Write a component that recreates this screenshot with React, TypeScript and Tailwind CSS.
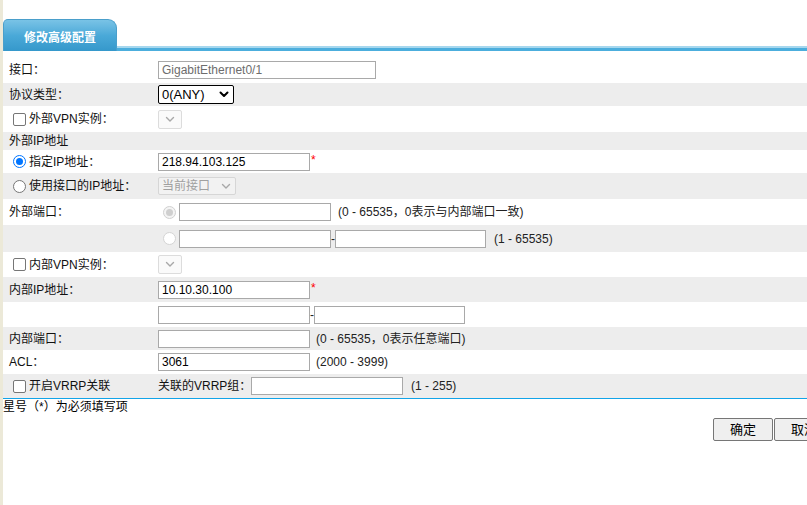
import React from "react";

const font = { fontFamily: '"Liberation Sans", "Noto Sans CJK SC", sans-serif' };

function Chevron({ color = "#000", bold = false }: { color?: string; bold?: boolean }) {
  return (
    <svg width="10" height="7" viewBox="0 0 10 7">
      <path d="M1.5 1.5 L5 5 L8.5 1.5" fill="none" stroke={color} strokeWidth={bold ? 2 : 1.4} strokeLinecap="round" strokeLinejoin="round" />
    </svg>
  );
}

function Input({ w, value = "", gray = false }: { w: string; value?: string; gray?: boolean }) {
  return (
    <div className={`${w} h-[18px] shrink-0 border border-[#a9a9a9] bg-white flex items-center pl-[3px] text-[12px] leading-none whitespace-nowrap ${gray ? "text-[#6d6d6d]" : "text-black"}`}>
      {value}
    </div>
  );
}

function Checkbox() {
  return <div className="w-[13px] h-[13px] border border-[#767676] rounded-[2px] bg-white shrink-0" />;
}

function Row({ h, gray, children }: { h: string; gray?: boolean; children: React.ReactNode }) {
  return <div className={`${h} flex items-center whitespace-nowrap ${gray ? "bg-[#ededed]" : "bg-white"}`}>{children}</div>;
}

function Label({ children }: { children: React.ReactNode }) {
  return <div className="w-[155px] pl-[6px] shrink-0 text-[12px] text-[#111]">{children}</div>;
}

function CheckLabel({ children, radio }: { children: React.ReactNode; radio?: React.ReactNode }) {
  return (
    <div className="w-[155px] pl-[10px] shrink-0 flex items-center gap-[3px] text-[12px] text-[#111]">
      {radio ?? <Checkbox />}
      <span>{children}</span>
    </div>
  );
}

function SmallDisabledSelect() {
  return (
    <div className="w-[24px] h-[19px] border border-[#dcdcdc] rounded-[2px] bg-[#fafafa] flex items-center justify-center">
      <Chevron color="#a8a8a8" />
    </div>
  );
}

function StarInput({ value }: { value: string }) {
  return (
    <div className="flex items-start">
      <Input w="w-[152px]" value={value} />
      <span className="text-[#ff0000] text-[12px] leading-[12px] ml-[1px] mt-[1px]">*</span>
    </div>
  );
}

export default function App() {
  return (
    <div className="w-[807px] h-[505px] overflow-hidden flex bg-white" style={font}>
      <div className="w-[3px] h-full bg-[#ece9d8] shrink-0" />
      <div className="flex-1 flex flex-col min-w-0">
        <div className="h-[19px]" />
        <div className="flex items-end h-[32px]">
          <div className="w-[114px] h-[32px] shrink-0 rounded-tl-[5px] rounded-tr-[9px] border border-b-0 border-[#4a9fcb] bg-gradient-to-b from-[#79c3e6] via-[#4aa9d8] to-[#3598cb] flex justify-center pt-[11px] text-[12px] font-bold text-white leading-[14px]">
            修改高级配置
          </div>
          <div className="flex-1 h-[5px] flex flex-col">
            <div className="h-[2px] bg-[#a6d7ee]" />
            <div className="h-[3px] bg-[#4caedd]" />
          </div>
        </div>
        <div className="h-[6px]" />

        <Row h="h-[26px]">
          <Label>接口：</Label>
          <Input w="w-[218px]" value="GigabitEthernet0/1" gray />
        </Row>
        <Row h="h-[23px]" gray>
          <Label>协议类型：</Label>
          <div className="w-[76px] h-[19px] border border-[#000] rounded-[2px] bg-white flex items-center justify-between pl-[3px] pr-[4px] text-[13px] text-black">
            <span>0(ANY)</span>
            <Chevron bold />
          </div>
        </Row>
        <Row h="h-[26px]">
          <CheckLabel>外部VPN实例：</CheckLabel>
          <SmallDisabledSelect />
        </Row>
        <Row h="h-[18px]" gray>
          <Label>外部IP地址</Label>
        </Row>
        <Row h="h-[23px]">
          <CheckLabel
            radio={
              <div className="w-[13px] h-[13px] rounded-full border-[1.5px] border-[#0075ff] bg-white flex items-center justify-center shrink-0">
                <div className="w-[7px] h-[7px] rounded-full bg-[#0075ff]" />
              </div>
            }
          >
            指定IP地址：
          </CheckLabel>
          <StarInput value="218.94.103.125" />
        </Row>
        <Row h="h-[26px]" gray>
          <CheckLabel radio={<div className="w-[13px] h-[13px] rounded-full border border-[#767676] bg-white shrink-0" />}>
            使用接口的IP地址：
          </CheckLabel>
          <div className="w-[78px] h-[18px] border border-[#d6d6d6] rounded-[2px] bg-[#f2f2f2] flex items-center justify-between pl-[3px] pr-[4px] text-[12px] text-[#a0a0a0]">
            <span>当前接口</span>
            <Chevron color="#a8a8a8" />
          </div>
        </Row>
        <Row h="h-[26px]">
          <Label>外部端口：</Label>
          <div className="flex items-center">
            <div className="ml-[5px] w-[13px] h-[13px] rounded-full border border-[#d0d0d0] bg-[#f4f4f4] flex items-center justify-center">
              <div className="w-[7px] h-[7px] rounded-full bg-[#cfcfcf]" />
            </div>
            <div className="ml-[3px]">
              <Input w="w-[152px]" />
            </div>
            <span className="ml-[7px] text-[12px] text-[#222]">(0 - 65535，0表示与内部端口一致)</span>
          </div>
        </Row>
        <Row h="h-[27px]" gray>
          <Label>{""}</Label>
          <div className="flex items-center">
            <div className="ml-[5px] w-[13px] h-[13px] rounded-full border border-[#d4d4d4] bg-white" />
            <div className="ml-[3px]">
              <Input w="w-[152px]" />
            </div>
            <span className="w-[4px] text-[12px] text-[#222] leading-none">-</span>
            <Input w="w-[151px]" />
            <span className="ml-[8px] text-[12px] text-[#222]">(1 - 65535)</span>
          </div>
        </Row>
        <Row h="h-[25px]">
          <CheckLabel>内部VPN实例：</CheckLabel>
          <SmallDisabledSelect />
        </Row>
        <Row h="h-[25px]" gray>
          <Label>内部IP地址：</Label>
          <StarInput value="10.10.30.100" />
        </Row>
        <Row h="h-[25px]">
          <Label>{""}</Label>
          <Input w="w-[152px]" />
          <span className="w-[4px] text-[12px] text-[#222] leading-none">-</span>
          <Input w="w-[151px]" />
        </Row>
        <Row h="h-[23px]" gray>
          <Label>内部端口：</Label>
          <Input w="w-[152px]" />
          <span className="ml-[6px] text-[12px] text-[#222]">(0 - 65535，0表示任意端口)</span>
        </Row>
        <Row h="h-[24px]">
          <Label>ACL：</Label>
          <Input w="w-[152px]" value="3061" />
          <span className="ml-[6px] text-[12px] text-[#222]">(2000 - 3999)</span>
        </Row>
        <Row h="h-[24px]" gray>
          <CheckLabel>开启VRRP关联</CheckLabel>
          <span className="w-[93px] shrink-0 whitespace-nowrap text-[12px] text-[#111]">关联的VRRP组：</span>
          <Input w="w-[152px]" />
          <span className="ml-[8px] text-[12px] text-[#222]">(1 - 255)</span>
        </Row>
        <div className="h-[1px] bg-[#12a4e8]" />
        <div className="h-[16px] flex items-center text-[12px] text-black leading-none">星号（*）为必须填写项</div>
        <div className="mt-[3px] flex gap-[1px] pl-[710px]">
          <div className="w-[60px] h-[23px] shrink-0 border border-[#767676] rounded-[2px] bg-[#efefef] flex items-center justify-center text-[13px] text-black">
            确定
          </div>
          <div className="w-[60px] h-[23px] shrink-0 border border-[#767676] rounded-[2px] bg-[#efefef] flex items-center justify-center text-[13px] text-black">
            取消
          </div>
        </div>
      </div>
    </div>
  );
}
